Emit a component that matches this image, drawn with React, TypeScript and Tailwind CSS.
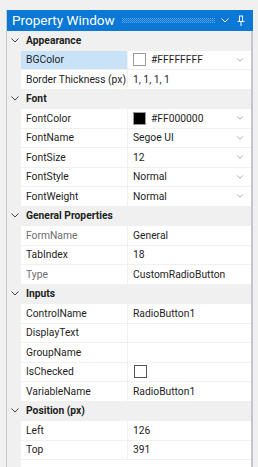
import { ChevronDown } from 'lucide-react';

type Row =
  | { kind: 'cat'; label: string }
  | {
      kind: 'prop';
      name: string;
      value?: string;
      swatch?: string;
      check?: boolean;
      dropdown?: boolean;
      dim?: boolean;
      selected?: boolean;
    };

const rows: Row[] = [
  { kind: 'cat', label: 'Appearance' },
  { kind: 'prop', name: 'BGColor', value: '#FFFFFFFF', swatch: '#ffffff', dropdown: true, selected: true },
  { kind: 'prop', name: 'Border Thickness (px)', value: '1, 1, 1, 1' },
  { kind: 'cat', label: 'Font' },
  { kind: 'prop', name: 'FontColor', value: '#FF000000', swatch: '#000000', dropdown: true },
  { kind: 'prop', name: 'FontName', value: 'Segoe UI', dropdown: true },
  { kind: 'prop', name: 'FontSize', value: '12', dropdown: true },
  { kind: 'prop', name: 'FontStyle', value: 'Normal', dropdown: true },
  { kind: 'prop', name: 'FontWeight', value: 'Normal', dropdown: true },
  { kind: 'cat', label: 'General Properties' },
  { kind: 'prop', name: 'FormName', value: 'General', dim: true },
  { kind: 'prop', name: 'TabIndex', value: '18' },
  { kind: 'prop', name: 'Type', value: 'CustomRadioButton', dim: true },
  { kind: 'cat', label: 'Inputs' },
  { kind: 'prop', name: 'ControlName', value: 'RadioButton1' },
  { kind: 'prop', name: 'DisplayText' },
  { kind: 'prop', name: 'GroupName' },
  { kind: 'prop', name: 'IsChecked', check: true },
  { kind: 'prop', name: 'VariableName', value: 'RadioButton1' },
  { kind: 'cat', label: 'Position (px)' },
  { kind: 'prop', name: 'Left', value: '126' },
  { kind: 'prop', name: 'Top', value: '391' },
];

const SmallChevron = ({ className }: { className?: string }) => (
  <svg width="8" height="5" viewBox="0 0 8 5" className={className}>
    <path d="M0.5 0.5 L4 4 L7.5 0.5" fill="none" stroke="currentColor" strokeWidth="1" />
  </svg>
);

export default function App() {
  return (
    <div
      className="w-[258px] h-[467px] bg-[#f0f0f0] pt-[10px] pl-[6px] pr-[5px] flex flex-col overflow-hidden"
      style={{ fontFamily: '"Segoe UI", Roboto, Lato, sans-serif' }}
    >
      <div className="flex-1 flex flex-col border-l border-[#c9c9c9]">
        {/* Title bar */}
        <div className="h-[21px] bg-[#0a78d4] flex items-center pl-[5px] pr-[7px] text-white">
          <span className="text-[13.5px] leading-none whitespace-nowrap">Property Window</span>
          <svg className="ml-[7px] flex-1 h-[5px]" preserveAspectRatio="none">
            <defs>
              <pattern id="grip" width="2" height="2" patternUnits="userSpaceOnUse">
                <rect x="0" y="0" width="1" height="1" fill="#5fa6e3" />
                <rect x="1" y="1" width="1" height="1" fill="#3d93dd" />
              </pattern>
            </defs>
            <rect width="100%" height="100%" fill="url(#grip)" />
          </svg>
          <SmallChevron className="ml-[6px] text-white" />
          <svg width="10" height="12" viewBox="0 0 10 12" className="ml-[7px]">
            <path d="M3 1 H7 M3.5 1 V6 M6.5 1 V6 M1.5 6.5 H8.5 M5 6.5 V11" fill="none" stroke="white" strokeWidth="1" />
          </svg>
        </div>

        {/* Grid */}
        <div className="flex-1 flex flex-col bg-white border-r-2 border-[#c4c4cc] text-[10.3px] text-[#1e1e1e]">
          {rows.map((r, i) =>
            r.kind === 'cat' ? (
              <div key={i} className="h-[19.5px] flex items-center bg-[#f0f0f0] border-b border-[#f0f0f0]">
                <div className="w-[14px] flex justify-center pl-[1px]">
                  <SmallChevron className="text-[#444]" />
                </div>
                <span className="pl-[5px] font-bold">{r.label}</span>
              </div>
            ) : (
              <div key={i} className="h-[19.5px] flex border-b border-[#f0f0f0]">
                <div className="w-[14px] shrink-0 bg-[#f0f0f0]" />
                <div
                  className={`w-[107px] shrink-0 flex items-center pl-[5px] whitespace-nowrap overflow-hidden border-r border-[#f0f0f0] ${
                    r.selected ? 'bg-[#c8e3f8]' : ''
                  } ${r.dim ? 'text-[#6d6d6d]' : ''}`}
                >
                  {r.name}
                </div>
                <div className="flex-1 flex items-center pl-[5px] pr-[6px] whitespace-nowrap">
                  {r.swatch && (
                    <span
                      className="w-[13px] h-[13px] border border-[#9a9a9a] mr-[5px] shrink-0"
                      style={{ backgroundColor: r.swatch }}
                    />
                  )}
                  {r.check && <span className="w-[13px] h-[13px] border border-[#555] bg-white ml-[1px]" />}
                  <span className="flex-1">{r.value}</span>
                  {r.dropdown && <ChevronDown size={10} strokeWidth={1.5} className="text-[#7a7a7a]" />}
                </div>
              </div>
            )
          )}
          <div className="flex-1 flex">
            <div className="w-[14px] bg-[#f0f0f0]" />
          </div>
        </div>
      </div>
    </div>
  );
}
